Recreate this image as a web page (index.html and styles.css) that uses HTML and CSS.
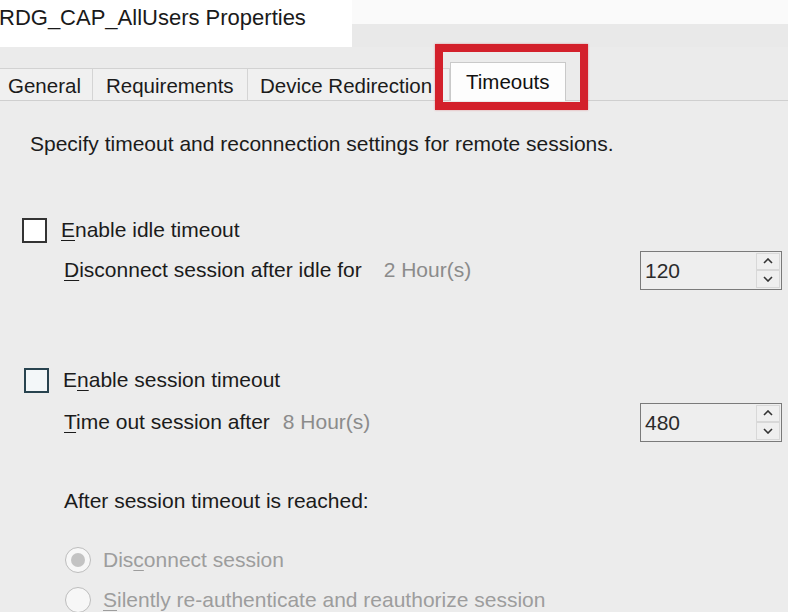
FILE: index.html
```html
<!DOCTYPE html>
<html>
<head>
<meta charset="utf-8">
<link rel="stylesheet" href="styles.css">
</head>
<body>
<div class="window">
  <div class="titlebar">
    <div class="title">RDG_CAP_AllUsers Properties</div>
    <div class="title-rest"></div>
  </div>
  <div class="tabs">
    <div class="tab tab-general">General</div>
    <div class="tab tab-req">Requirements</div>
    <div class="tab tab-dev">Device Redirection</div>
    <div class="tab tab-sel">Timeouts</div>
    <div class="tab-fill"></div>
    <div class="highlight"></div>
  </div>
  <div class="panel">
    <p class="intro">Specify timeout and reconnection settings for remote sessions.</p>

    <div class="check-row row-idle">
      <span class="checkbox"></span>
      <span class="label"><u>E</u>nable idle timeout</span>
    </div>
    <div class="field-row row-idle-field">
      <span class="label"><u>D</u>isconnect session after idle for</span>
      <span class="hours hours-idle">2 Hour(s)</span>
      <div class="spin">
        <span class="spin-value">120</span>
        <div class="spin-btns">
          <span class="spin-btn"><svg width="10" height="6" viewBox="0 0 10 6"><path d="M1 5 L5 1 L9 5" fill="none" stroke="#333" stroke-width="1.6"/></svg></span>
          <span class="spin-btn"><svg width="10" height="6" viewBox="0 0 10 6"><path d="M1 1 L5 5 L9 1" fill="none" stroke="#333" stroke-width="1.6"/></svg></span>
        </div>
      </div>
    </div>

    <div class="check-row row-session">
      <span class="checkbox checkbox-focus"></span>
      <span class="label">E<u>n</u>able session timeout</span>
    </div>
    <div class="field-row row-session-field">
      <span class="label"><u>T</u>ime out session after</span>
      <span class="hours hours-session">8 Hour(s)</span>
      <div class="spin">
        <span class="spin-value">480</span>
        <div class="spin-btns">
          <span class="spin-btn"><svg width="10" height="6" viewBox="0 0 10 6"><path d="M1 5 L5 1 L9 5" fill="none" stroke="#333" stroke-width="1.6"/></svg></span>
          <span class="spin-btn"><svg width="10" height="6" viewBox="0 0 10 6"><path d="M1 1 L5 5 L9 1" fill="none" stroke="#333" stroke-width="1.6"/></svg></span>
        </div>
      </div>
    </div>

    <p class="after">After session timeout is reached:</p>

    <div class="radio-row row-r1">
      <span class="radio radio-on"><span class="dot"></span></span>
      <span class="label disabled">Dis<u>c</u>onnect session</span>
    </div>
    <div class="radio-row row-r2">
      <span class="radio"></span>
      <span class="label disabled"><u>S</u>ilently re-authenticate and reauthorize session</span>
    </div>
  </div>
</div>
</body>
</html>
```

FILE: styles.css
```css
html, body {
  margin: 0;
  padding: 0;
}
body {
  width: 788px;
  height: 612px;
  overflow: hidden;
  background: #ebebeb;
  font-family: "Liberation Sans", Arial, sans-serif;
  color: #1b1b1b;
}
.window {
  width: 788px;
  height: 612px;
  display: flex;
  flex-direction: column;
  overflow: hidden;
}
.titlebar {
  flex-shrink: 0;
  height: 47px;
  display: flex;
}
.title {
  width: 353px;
  background: #ffffff;
  font-size: 22px;
  line-height: 36px;
  margin-left: -1px;
  color: #1a1a1a;
  white-space: nowrap;
}
.title-rest {
  flex: 1;
  background: linear-gradient(#fafafa 0, #fafafa 24px, #e9e9e9 24px);
}
.tabs {
  flex-shrink: 0;
  position: relative;
  margin-top: 15px;
  height: 39px;
  display: flex;
  align-items: flex-end;
}
.tab {
  box-sizing: border-box;
  height: 33px;
  font-size: 20.5px;
  line-height: 33px;
  background: #f0f0f0;
  border-top: 1px solid #d2d2d2;
  border-bottom: 1px solid #cfcfcf;
  border-right: 1px solid #d4d4d4;
  white-space: nowrap;
  overflow: hidden;
}
.tab-general { width: 93px; padding-left: 8px; }
.tab-req { width: 155px; padding-left: 13px; }
.tab-dev { width: 202px; padding-left: 12px; }
.tab-sel {
  width: 116px;
  height: 39px;
  line-height: 38px;
  background: #fdfdfd;
  border: 1px solid #c9c9c9;
  border-bottom: none;
  padding-left: 15px;
  color: #111;
}
.tab-fill {
  flex: 1;
  height: 1px;
  background: #cfcfcf;
  align-self: flex-end;
}
.highlight {
  position: absolute;
  left: 435px;
  top: -18px;
  width: 153px;
  height: 66px;
  box-sizing: border-box;
  border: 8px solid #d3202b;
  box-shadow: 0 0 2px rgba(211, 32, 43, 0.4);
}
.panel {
  flex: 1;
  min-height: 0;
  background: #ececec;
  overflow: hidden;
}
.label u {
  text-decoration-thickness: 1px;
  text-underline-offset: 3px;
}
.intro {
  margin: 29px 0 0 30px;
  font-size: 21px;
  line-height: 28px;
}
.check-row {
  display: flex;
  align-items: center;
  font-size: 21px;
  height: 28px;
}
.row-idle { margin: 58px 0 0 22px; }
.row-session { margin: 76px 0 0 24px; }
.checkbox {
  box-sizing: border-box;
  width: 25px;
  height: 25px;
  border: 2px solid #333;
  background: #fff;
  margin-right: 14px;
}
.checkbox-focus {
  border-color: #28434f;
  background: #f3f7f9;
}
.field-row {
  display: flex;
  align-items: center;
  font-size: 21px;
  height: 40px;
  padding-left: 64px;
}
.row-idle-field { margin-top: 6px; }
.row-session-field { margin-top: 8px; }
.hours {
  color: #8b8b8b;
}
.hours-idle { margin-left: 22px; }
.hours-session { margin-left: 13px; }
.spin {
  margin-left: auto;
  margin-right: 6px;
  box-sizing: border-box;
  width: 142px;
  height: 39px;
  border: 1px solid #7a7a7a;
  background: #eeeeee;
  display: flex;
  align-items: stretch;
}
.spin-value {
  flex: 1;
  font-size: 21px;
  line-height: 37px;
  padding-left: 4px;
  color: #2b2b2b;
}
.spin-btns {
  width: 24px;
  margin: 1px 1px 1px 0;
  display: flex;
  flex-direction: column;
}
.spin-btn {
  flex: 1;
  box-sizing: border-box;
  border: 1px solid #d8d8d8;
  background: #efefef;
  display: flex;
  align-items: center;
  justify-content: center;
}
.after {
  margin: 45px 0 0 64px;
  font-size: 21px;
  line-height: 28px;
}
.radio-row {
  display: flex;
  align-items: center;
  font-size: 21px;
  height: 30px;
  padding-left: 65px;
}
.row-r1 { margin-top: 30px; }
.row-r2 { margin-top: 10px; }
.radio {
  box-sizing: border-box;
  width: 26px;
  height: 26px;
  border-radius: 50%;
  border: 1.5px solid #bdbdbd;
  background: #f7f7f7;
  margin-right: 12px;
  display: flex;
  align-items: center;
  justify-content: center;
}
.radio .dot {
  width: 14px;
  height: 14px;
  border-radius: 50%;
  background: #c3c3c3;
}
.disabled {
  color: #9d9d9d;
}
```
